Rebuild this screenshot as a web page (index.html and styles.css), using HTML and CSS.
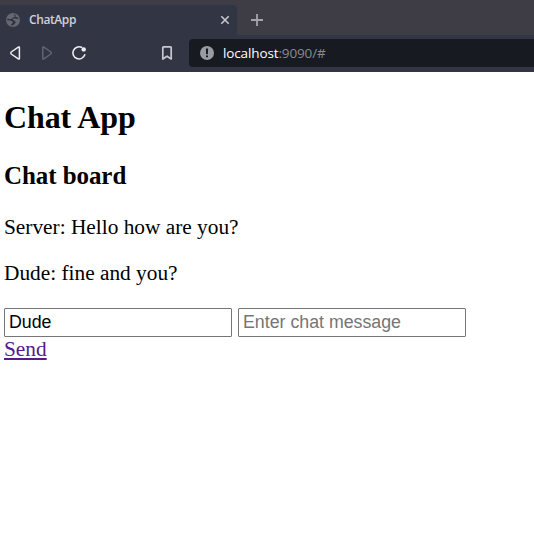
FILE: index.html
```html
<!DOCTYPE html>
<html lang="en">
<head>
<meta charset="utf-8">
<title>ChatApp</title>
<link rel="stylesheet" href="styles.css">
</head>
<body>
<header class="browser">
  <div class="tabs">
    <div class="tab">
      <svg class="globe" width="14" height="14" viewBox="0 0 14 14"><circle cx="7" cy="7" r="7" fill="#656870"/><path d="M7.2 1.5 9.8 1.8 9 3.6 7.2 4.4 6.4 5.6 4 6.2 1.4 5.6 1.2 7.3 4.4 7.4 7 8.8 6.2 10.4 4.6 12.2 6.6 12.6 8.6 11 9.8 9.2 8.8 7.8 6.8 7 7.4 5.6 9.8 5.4 12.4 6.2 12.2 4.8 10.2 4Z" fill="#30333f"/></svg>
      <span class="tab-title">ChatApp</span>
      <svg class="close" width="10" height="10" viewBox="0 0 10 10"><path d="M1.3 1.3 8.7 8.7M8.7 1.3 1.3 8.7" stroke="#c7c8cc" stroke-width="1.6"/></svg>
    </div>
    <svg class="plus" width="12" height="12" viewBox="0 0 12 12"><path d="M6 0V12M0 6H12" stroke="#a5a5a9" stroke-width="1.8"/></svg>
  </div>
  <div class="toolbar">
    <svg class="nav" width="161" height="34" viewBox="0 0 161 34" fill="none" stroke-linejoin="round" stroke-linecap="round">
      <path d="M19.4 8.8V19.2Q19.4 20.5 18.3 19.8L11.2 15Q10.2 14 11.2 13L18.3 8.2Q19.4 7.5 19.4 8.8Z" stroke="#eeeeef" stroke-width="1.5"/>
      <path d="M42.8 8.8V19.2Q42.8 20.5 43.9 19.8L50.8 15Q51.8 14 50.8 13L43.9 8.2Q42.8 7.5 42.8 8.8Z" stroke="#626571" stroke-width="1.5"/>
      <path d="M81.6 8.3A6.1 6.1 0 1 0 84.8 15.8" stroke="#eeeeef" stroke-width="1.6"/>
      <circle cx="83.7" cy="10.4" r="2.2" fill="#eeeeef"/>
    </svg>
    <svg class="bookmark" width="12" height="16" viewBox="0 0 12 16"><path d="M1.8 14V2.5Q1.8 1.8 2.5 1.8H9.5Q10.2 1.8 10.2 2.5V14L6 11.2Z" fill="none" stroke="#c8c9cd" stroke-width="1.7" stroke-linejoin="round"/></svg>
    <div class="address">
      <svg width="14" height="14" viewBox="0 0 14 14"><circle cx="7" cy="7" r="7" fill="#9a9ca4"/><path d="M5.9 2.6H8.1L7.9 8.3H6.1ZM6 9.4H8V11.3H6Z" fill="#181a21"/></svg>
      <span class="url"><b>localhost</b>:9090/#</span>
    </div>
  </div>
</header>
<main>
  <h1>Chat App</h1>
  <h3>Chat board</h3>
  <p>Server: Hello how are you?</p>
  <p>Dude: fine and you?</p>
  <form>
    <input type="text" value="Dude">
    <input type="text" placeholder="Enter chat message">
  </form>
  <a href="#">Send</a>
</main>
</body>
</html>
```
FILE: styles.css
```css
* { box-sizing: border-box; }
body { margin: 0; background: #fff; color: #000; font: 21.333px/24px "Liberation Serif", serif; }
svg { display: block; flex: none; }
.browser { height: 72px; background: #323544; }
.tabs { height: 35px; padding-top: 5px; display: flex; background: #3e3d45; }
.tab { width: 237px; height: 30px; padding: 0 7px 0 6px; display: flex; align-items: center; background: #323544; border-radius: 0 4px 0 0; }
.tab-title { margin-left: 9px; flex: 1; color: #d0d1d5; font: 600 12px/20px "Open Sans", sans-serif; letter-spacing: -.4px; }
.plus { margin: 9px 0 0 14px; }
.toolbar { height: 37px; padding-top: 4px; display: flex; }
.bookmark { margin: 6px 16px 0 0; }
.address { flex: 1; height: 28px; padding-left: 11px; display: flex; align-items: center; background: #181a21; border-radius: 4px 0 0 4px; }
.url { margin-left: 9px; color: #888a90; font: 13.5px/20px "Open Sans", sans-serif; letter-spacing: -.13px; }
.url b { color: #fff; font-weight: 400; }
main { padding: 27px 4px 0; }
h1 { margin: 0; font-size: 32px; line-height: 36px; letter-spacing: -.1px; }
h3 { margin: 27px 0 0; font-size: 24.96px; line-height: 28px; letter-spacing: -.05px; }
p { margin: 25px 0 0; line-height: 25px; }
p + p { margin-top: 21px; }
form { display: flex; gap: 6px; margin-top: 22px; }
input { width: 228px; height: 29px; margin: 0; padding: 1px 4px; border: 1px solid #767676; border-radius: 1px; background: #fff; color: #000; font: 17.778px "Liberation Sans", sans-serif; }
input::placeholder { color: #757575; }
a { display: inline-block; color: #551a8b; line-height: 25px; text-decoration-thickness: 2px; text-underline-offset: 2px; text-decoration-skip-ink: none; }
```
